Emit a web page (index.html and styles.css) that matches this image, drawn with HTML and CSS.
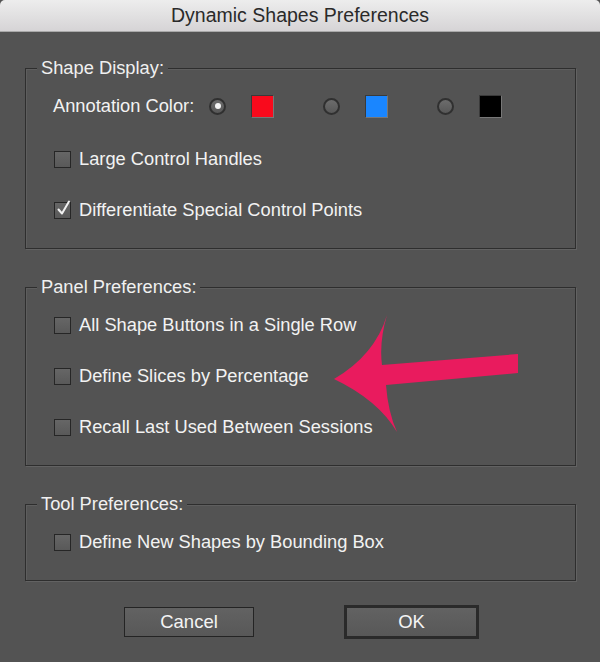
FILE: index.html
```html
<!DOCTYPE html>
<html lang="en">
<head>
    <meta charset="UTF-8">
    <title>Dynamic Shapes Preferences</title>
    <meta name="viewport" content="width=device-width, initial-scale=1.0">
    <link rel="stylesheet" href="styles.css">
</head>
<body>
    <div class="dialog">
        <div class="titlebar">Dynamic Shapes Preferences</div>

        <div class="dialog-body">
            <div class="group">
                <div class="group-title">Shape Display:</div>
                <div class="rows">
                    <div class="row annotation">
                        <span class="label">Annotation Color:</span>
                        <div class="swatch-group">
                            <span class="radio checked"></span>
                            <span class="swatch red"></span>
                        </div>
                        <div class="swatch-group">
                            <span class="radio"></span>
                            <span class="swatch blue"></span>
                        </div>
                        <div class="swatch-group">
                            <span class="radio"></span>
                            <span class="swatch black"></span>
                        </div>
                    </div>
                    <label class="row">
                        <span class="checkbox"></span>
                        <span class="label">Large Control Handles</span>
                    </label>
                    <label class="row">
                        <span class="checkbox checked">
                            <svg viewBox="0 0 17 17" width="17" height="17">
                                <path d="M3.5 9.5 L7 13.5 L14 1.5" fill="none" stroke="#f2f2f2" stroke-width="2" stroke-linecap="round" stroke-linejoin="round"/>
                            </svg>
                        </span>
                        <span class="label">Differentiate Special Control Points</span>
                    </label>
                </div>
            </div>

            <div class="group">
                <div class="group-title">Panel Preferences:</div>
                <div class="rows">
                    <label class="row">
                        <span class="checkbox"></span>
                        <span class="label">All Shape Buttons in a Single Row</span>
                    </label>
                    <label class="row">
                        <span class="checkbox"></span>
                        <span class="label">Define Slices by Percentage</span>
                    </label>
                    <label class="row">
                        <span class="checkbox"></span>
                        <span class="label">Recall Last Used Between Sessions</span>
                    </label>
                </div>
            </div>

            <div class="group">
                <div class="group-title">Tool Preferences:</div>
                <div class="rows">
                    <label class="row">
                        <span class="checkbox"></span>
                        <span class="label">Define New Shapes by Bounding Box</span>
                    </label>
                </div>
            </div>

            <div class="buttons">
                <button class="btn">Cancel</button>
                <button class="btn default">OK</button>
            </div>
        </div>

        <!-- annotation arrow drawn on top of the dialog -->
        <svg class="arrow" viewBox="0 0 600 662" width="600" height="662">
            <path d="M334 379 Q375 355 387 315 Q379 342 382 365 L518 354 L518 373 L386 385 Q388 412 397 432 Q378 400 334 379 Z" fill="#e91b5e"/>
        </svg>
    </div>
</body>
</html>
```

FILE: styles.css
```css
* {
    box-sizing: border-box;
}

body {
    margin: 0;
    padding: 0;
    background-color: #535353;
    font-family: 'Liberation Sans', Arial, sans-serif;
}

.dialog {
    position: relative;
    width: 600px;
    height: 662px;
    background-color: #535353;
    overflow: hidden;
}

.titlebar {
    height: 32px;
    line-height: 31px;
    text-align: center;
    font-size: 19.5px;
    color: #2a2a2a;
    background: linear-gradient(#ededed, #d6d4d6);
    border-bottom: 1px solid #a9a9a9;
    border-radius: 5px 5px 0 0;
}

.dialog-body {
    display: flex;
    flex-direction: column;
    gap: 38px;
    padding: 36px 24px 0 25px;
}

.group {
    border: 1px solid #2e2e2e;
    box-shadow: 1px 1px 0 #626262, inset 1px 1px 0 #5e5e5e;
    padding: 0 0 25px 27px;
}

.group-title {
    width: max-content;
    margin: -11px 0 0 -16px;
    padding: 0 4px;
    line-height: 20px;
    font-size: 18.3px;
    color: #f0f0f0;
    background-color: #535353;
}

.rows {
    display: flex;
    flex-direction: column;
    gap: 25px;
    padding-top: 15px;
}

.row {
    display: flex;
    align-items: center;
    height: 26px;
    font-size: 18.3px;
    color: #f2f2f2;
}

.annotation {
    margin-bottom: 2px;
}

.annotation .label {
    margin-right: 15px;
}

.swatch-group {
    display: flex;
    align-items: center;
    gap: 25px;
    margin-right: 49px;
}

.radio {
    width: 17px;
    height: 17px;
    border-radius: 50%;
    border: 2px solid #303030;
    background: linear-gradient(#6c6c6c, #585858);
    display: flex;
    align-items: center;
    justify-content: center;
}

.radio.checked::after {
    content: "";
    width: 6px;
    height: 6px;
    border-radius: 50%;
    background-color: #f4f4f4;
}

.swatch {
    width: 23px;
    height: 23px;
    border: 1px solid #3a3a3a;
    border-right-color: #777;
    border-bottom-color: #777;
}

.red {
    background-color: #f90a1c;
}

.blue {
    background-color: #1a86ff;
}

.black {
    background-color: #000;
}

.checkbox {
    position: relative;
    width: 17px;
    height: 17px;
    margin: 0 8px 0 1px;
    border: 1px solid #262626;
    background: linear-gradient(#666, #595959);
    flex-shrink: 0;
}

.checkbox svg {
    position: absolute;
    left: 0;
    top: -3px;
}

.buttons {
    display: flex;
    justify-content: center;
    align-items: center;
    gap: 90px;
    margin-top: -14px;
    padding-left: 2px;
}

.btn {
    width: 130px;
    height: 30px;
    font-family: 'Liberation Sans', Arial, sans-serif;
    font-size: 18.5px;
    color: #f4f4f4;
    background: linear-gradient(#626262, #585858);
    border: 1px solid #242424;
    padding: 0;
}

.btn.default {
    width: 135px;
    height: 34px;
    border: 3px solid #2a2a2a;
}

.arrow {
    position: absolute;
    left: 0;
    top: 0;
    pointer-events: none;
}
```
